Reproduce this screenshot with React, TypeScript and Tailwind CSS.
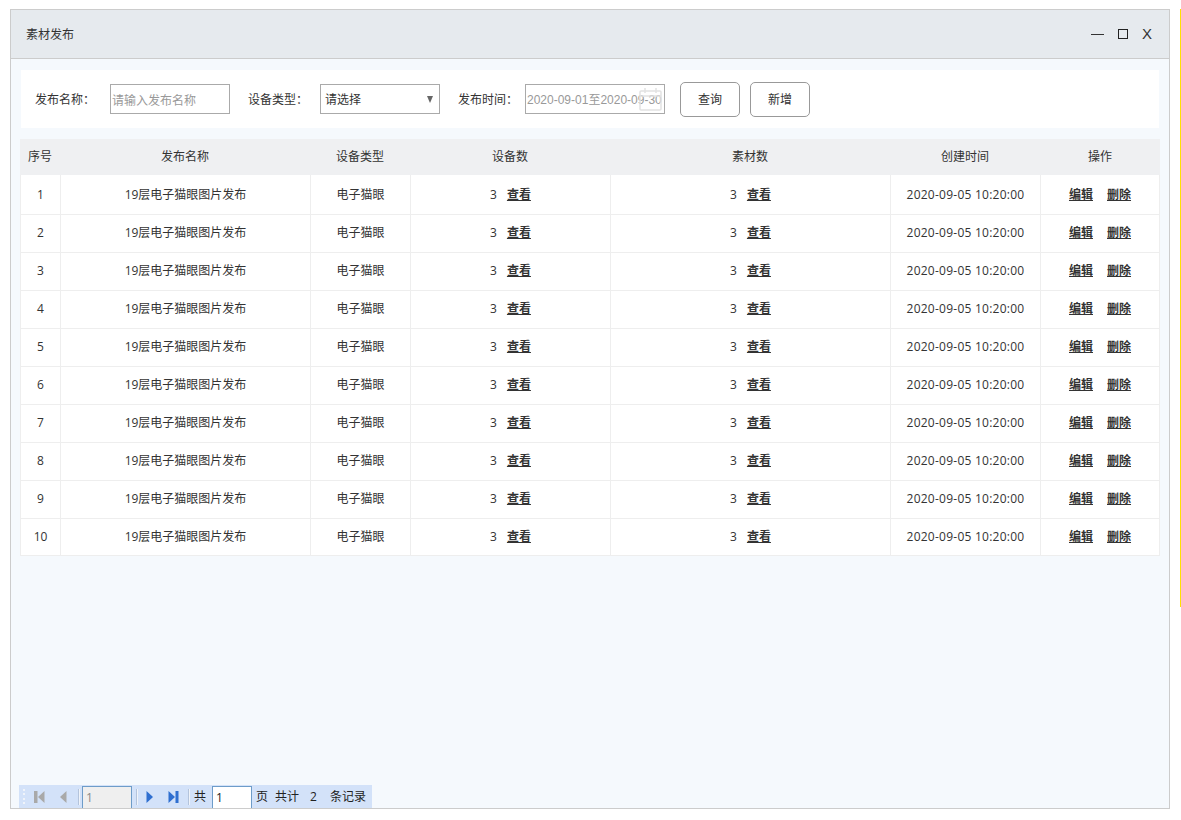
const rows = [1, 2, 3, 4, 5, 6, 7, 8, 9, 10]

function Sep() {
  return <span className="h-[16px] w-[2px] shrink-0 border-l border-[#b4c4dc] bg-[#f0f4fa]" />
}

function Pager() {
  return (
    <div className="flex h-[23px] w-[353px] items-center whitespace-nowrap bg-[#d3e2f9] text-[12px] text-[#222]">
      <div className="ml-[4px] flex h-[16px] w-[2px] shrink-0 flex-col justify-between">
        <span className="h-[2px] w-[2px] bg-[#f0f4fa]" />
        <span className="h-[2px] w-[2px] bg-[#f0f4fa]" />
        <span className="h-[2px] w-[2px] bg-[#f0f4fa]" />
        <span className="h-[2px] w-[2px] bg-[#f0f4fa]" />
      </div>
      <svg width="11" height="12" viewBox="0 0 11 12" className="ml-[9px] shrink-0">
        <rect x="0" y="0" width="3.5" height="12" fill="#a9a9a9" />
        <path d="M10.5 0 L4 6 L10.5 12 Z" fill="#a9a9a9" />
      </svg>
      <svg width="7" height="12" viewBox="0 0 7 12" className="ml-[15px] shrink-0">
        <path d="M6.5 0 L0 6 L6.5 12 Z" fill="#a9a9a9" />
      </svg>
      <span className="ml-[11px]" />
      <Sep />
      <div className="ml-[2px] flex h-[22px] w-[50px] shrink-0 items-center self-end border border-b-0 border-[#6d9cc9] bg-[#efefef] pl-[3px] text-[#8a8a8a]">1</div>
      <span className="ml-[4px]" />
      <Sep />
      <svg width="7" height="12" viewBox="0 0 7 12" className="ml-[8px] shrink-0">
        <path d="M0.5 0 L7 6 L0.5 12 Z" fill="#2f6fd0" />
      </svg>
      <svg width="11" height="12" viewBox="0 0 11 12" className="ml-[15px] shrink-0">
        <path d="M0.5 0 L7 6 L0.5 12 Z" fill="#2f6fd0" />
        <rect x="7.5" y="0" width="3" height="12" fill="#2f6fd0" />
      </svg>
      <span className="ml-[9px]" />
      <Sep />
      <span className="ml-[4px]">共</span>
      <div className="ml-[6px] flex h-[22px] w-[40px] shrink-0 items-center self-end border border-b-0 border-[#6d9cc9] bg-white pl-[3px]">1</div>
      <span className="ml-[4px]">页</span>
      <span className="ml-[7px]">共计</span>
      <span className="ml-[11px]">2</span>
      <span className="ml-[13px]">条记录</span>
    </div>
  )
}

export default function App() {
  return (
    <div className="flex h-[820px] w-[1181px] overflow-hidden bg-white pt-[9px] text-[12px] text-[#333] [font-family:'Open_Sans','Noto_Sans_CJK_SC',sans-serif]">
      <div className="ml-[10px] flex h-[800px] w-[1160px] flex-col border border-[#ccc] bg-[#f5f9fd]">
        {/* title bar */}
        <div className="flex h-[49px] shrink-0 items-center justify-between border-b border-[#ccc] bg-[#e6eaee] pl-[15px] pr-[17px]">
          <span className="pt-[2px]">素材发布</span>
          <div className="flex items-center">
            <span className="h-px w-[13px] bg-[#333]" />
            <span className="ml-[14px] h-[10px] w-[10px] border border-[#222]" />
            <span className="-mt-px ml-[14px] text-[15px] leading-none [font-family:'Liberation_Sans',sans-serif]">X</span>
          </div>
        </div>

        <div className="flex flex-1 flex-col px-[9px] pt-[11px]">
          {/* filters */}
          <div className="mx-px flex h-[58px] shrink-0 items-center bg-white pl-[14px]">
            <span className="w-[75px] pt-[2px]">发布名称：</span>
            <input
              readOnly
              placeholder="请输入发布名称"
              className="h-[30px] w-[120px] border border-[#aaa] px-[1px] pt-[2px] text-[12px] outline-none placeholder:text-[#999]"
            />
            <span className="ml-[18px] w-[72px] pt-[2px]">设备类型：</span>
            <div className="flex h-[30px] w-[120px] items-center justify-between border border-[#aaa] pl-[4px] pr-[6px] pt-px">
              <span>请选择</span>
              <svg width="6" height="7" viewBox="0 0 6 7">
                <path d="M0 0 H6 L3 7 Z" fill="#666" />
              </svg>
            </div>
            <span className="ml-[18px] w-[67px] pt-[2px]">发布时间：</span>
            <div className="relative flex h-[30px] w-[140px] items-center border border-[#aaa] pl-[1px] pt-px text-[#999] [font-family:'Liberation_Sans','Noto_Sans_CJK_SC',sans-serif]">
              <span className="whitespace-nowrap">2020-09-01至2020-09-30</span>
              <svg width="23" height="23" viewBox="0 0 23 23" fill="none" stroke="#e2e2e2" strokeWidth="1.5" className="absolute right-[2px] top-[3px]">
                <rect x="1" y="3" width="21" height="19" rx="1" />
                <path d="M1 8 H22 M6 0 V5 M17 0 V5" />
              </svg>
            </div>
            <button className="ml-[15px] h-[35px] w-[60px] rounded-[5px] border border-[#999] bg-white pt-[2px]">查询</button>
            <button className="ml-[10px] h-[35px] w-[60px] rounded-[5px] border border-[#999] bg-white pt-[2px]">新增</button>
          </div>

          {/* table */}
          <table className="mt-[11px] w-[1140px] table-fixed border-separate border-spacing-0 text-center">
            <colgroup>
              <col className="w-[40px]" />
              <col className="w-[250px]" />
              <col className="w-[100px]" />
              <col className="w-[200px]" />
              <col className="w-[280px]" />
              <col className="w-[150px]" />
              <col className="w-[120px]" />
            </colgroup>
            <thead>
              <tr className="h-[36px] bg-[#eff0f2]">
                <th className="font-normal">序号</th>
                <th className="font-normal">发布名称</th>
                <th className="font-normal">设备类型</th>
                <th className="font-normal">设备数</th>
                <th className="font-normal">素材数</th>
                <th className="font-normal">创建时间</th>
                <th className="font-normal">操作</th>
              </tr>
            </thead>
            <tbody className="bg-white">
              {rows.map((n) => (
                <tr key={n} className={n === 1 ? 'h-[40px]' : n === 10 ? 'h-[37px]' : 'h-[38px] [&>td]:pb-[2px]'}>
                  <td className="border-b border-l border-[#eeeeee]">{n}</td>
                  <td className="border-b border-l border-[#eeeeee]">19层电子猫眼图片发布</td>
                  <td className="border-b border-l border-[#eeeeee]">电子猫眼</td>
                  <td className="border-b border-l border-[#eeeeee]">
                    3<a className="ml-[10px] font-bold underline">查看</a>
                  </td>
                  <td className="border-b border-l border-[#eeeeee]">
                    3<a className="ml-[10px] font-bold underline">查看</a>
                  </td>
                  <td className="border-b border-l border-[#eeeeee] tracking-[0.25px]">2020-09-05 10:20:00</td>
                  <td className="border-x border-b border-[#eeeeee]">
                    <a className="font-bold underline">编辑</a>
                    <a className="ml-[14px] font-bold underline">删除</a>
                  </td>
                </tr>
              ))}
            </tbody>
          </table>

          <div className="-ml-px mt-auto">
            <Pager />
          </div>
        </div>
      </div>
      <div className="ml-[10px] h-[598px] w-px shrink-0 bg-[#ffe100]" />
    </div>
  )
}
